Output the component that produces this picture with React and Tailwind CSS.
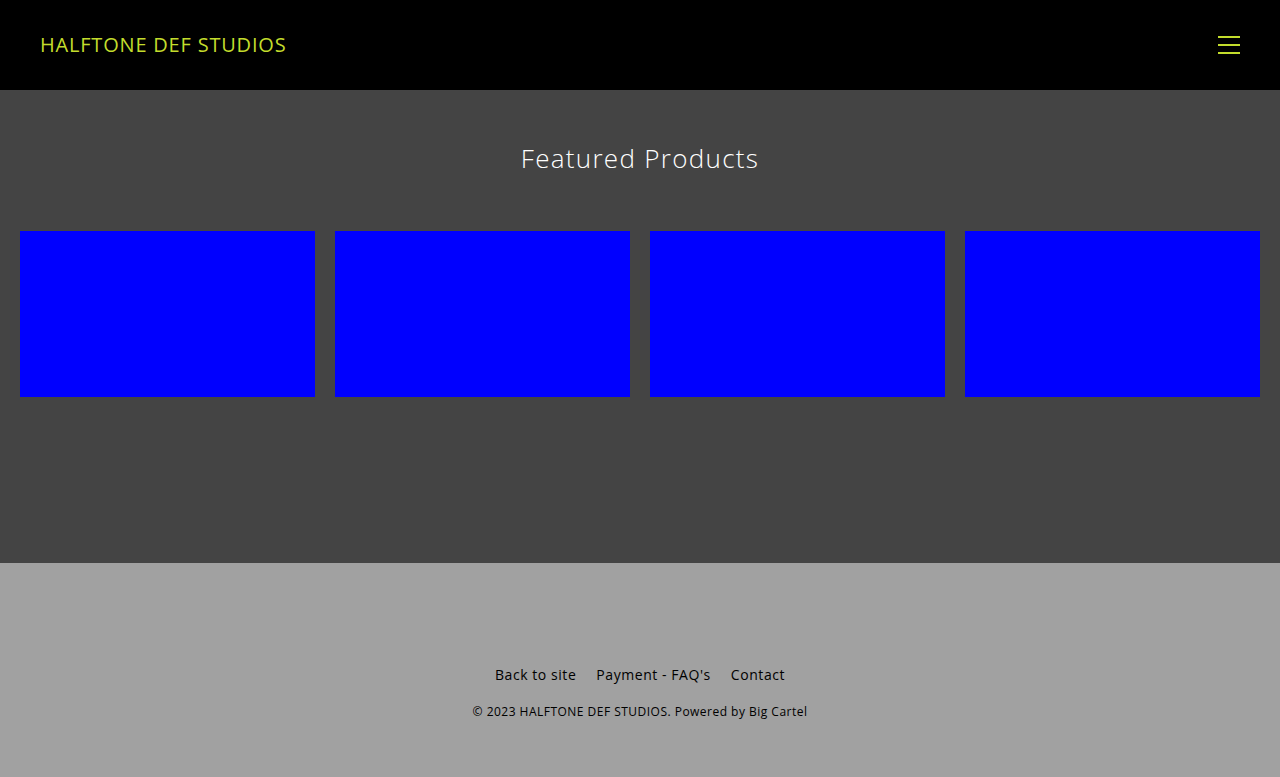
import React from 'react';

const products = [1, 2, 3, 4];

const App = () => {
    return (
        <div className="min-h-screen flex flex-col" style={{ fontFamily: '"Open Sans", "Liberation Sans", sans-serif' }}>
            {/* header */}
            <header className="h-[90px] bg-black flex items-center justify-between px-10">
                <a className="text-[20px] tracking-[0.04em] text-[#c3dc2c]">HALFTONE DEF STUDIOS</a>
                <button className="w-[22px] flex flex-col gap-[6px]">
                    <span className="block h-[2px] w-full bg-[#c3dc2c]" />
                    <span className="block h-[2px] w-full bg-[#c3dc2c]" />
                    <span className="block h-[2px] w-full bg-[#c3dc2c]" />
                </button>
            </header>

            {/* featured */}
            <main className="bg-[#444444] h-[473px] pt-[50px] px-5">
                <h1 className="text-center text-[26px] font-light text-white leading-[36px] tracking-[0.05em]">
                    Featured Products
                </h1>
                <div className="grid grid-cols-4 gap-5 mt-[55px]">
                    {products.map((p) => (
                        <div key={p} className="h-[166px] bg-[#0000ff]" />
                    ))}
                </div>
            </main>

            {/* footer */}
            <footer className="bg-[#a1a1a1] flex-1 flex flex-col items-center pt-[102px] pb-[44px]">
                <nav className="flex gap-5 text-[14px] text-black leading-5 tracking-[0.04em]">
                    <a>Back to site</a>
                    <a>Payment - FAQ's</a>
                    <a>Contact</a>
                </nav>
                <div className="mt-[19px] text-[12px] text-black leading-4 tracking-[0.04em]">
                    © 2023 HALFTONE DEF STUDIOS. Powered by Big Cartel
                </div>
            </footer>
        </div>
    );
};

export default App;
